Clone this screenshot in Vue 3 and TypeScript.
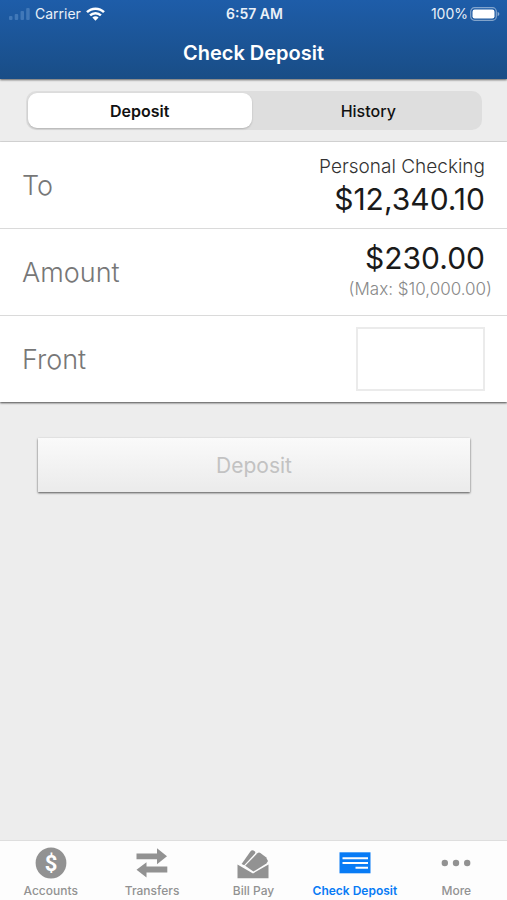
<script setup lang="ts">
import { ref } from 'vue'

type View = 'deposit' | 'history'
type Icon = 'accounts' | 'transfers' | 'billpay' | 'check' | 'more'

interface Tab {
  id: Icon
  label: string
}

const view = ref<View>('deposit')
const views: { id: View; label: string }[] = [
  { id: 'deposit', label: 'Deposit' },
  { id: 'history', label: 'History' },
]

const amount = ref('$230.00')
const activeTab = ref<Icon>('check')
const tabs: Tab[] = [
  { id: 'accounts', label: 'Accounts' },
  { id: 'transfers', label: 'Transfers' },
  { id: 'billpay', label: 'Bill Pay' },
  { id: 'check', label: 'Check Deposit' },
  { id: 'more', label: 'More' },
]
</script>

<template>
  <div class="screen">
    <header class="top">
      <div class="status">
        <div class="status-left">
          <svg class="signal" width="21" height="14" viewBox="0 0 21 14" aria-hidden="true">
            <rect x="0" y="9" width="3.500" height="4" rx="1" />
            <rect x="5.700" y="7" width="3.500" height="6" rx="1" />
            <rect x="11.500" y="4" width="3.500" height="9" rx="1" />
            <rect x="17.200" y="1" width="3.500" height="12" rx="1" />
          </svg>
          <span>Carrier</span>
          <svg width="19" height="14" viewBox="0 0 19 14" aria-hidden="true">
            <g fill="none" stroke="#fff" stroke-width="2.5">
              <path d="M1 5.2C5.700 .5 13.300 .5 18 5.200" />
              <path d="M4.100 8.400C7.100 5.400 11.900 5.400 14.900 8.400" />
            </g>
            <path d="M6.400 10.500C8.100 8.900 10.900 8.900 12.600 10.500L9.500 13.700Z" fill="#fff" />
          </svg>
        </div>
        <span class="time">6:57 AM</span>
        <div class="status-right">
          <span>100%</span>
          <svg width="30" height="14" viewBox="0 0 30 14" aria-hidden="true">
            <rect x=".7" y=".7" width="25.600" height="12.600" rx="3.800" fill="none" stroke="#fff" stroke-opacity=".45" stroke-width="1.200" />
            <rect x="2.500" y="2.500" width="22" height="9" rx="2.200" fill="#fff" />
            <path d="M27.600 4.700Q29.400 5.500 29.400 7T27.600 9.300Z" fill="#fff" fill-opacity=".5" />
          </svg>
        </div>
      </div>
      <h1>Check Deposit</h1>
    </header>

    <div class="segment-bar">
      <div class="segment">
        <button
          v-for="v in views"
          :key="v.id"
          type="button"
          :class="{ selected: view === v.id }"
          :aria-pressed="view === v.id"
          @click="view = v.id"
        >
          {{ v.label }}
        </button>
      </div>
    </div>

    <main>
      <section class="rows">
        <div class="row">
          <span class="label">To</span>
          <div class="value">
            <span class="account">Personal Checking</span>
            <span class="money">$12,340.10</span>
          </div>
        </div>
        <div class="row">
          <label class="label" for="amount">Amount</label>
          <div class="value">
            <input id="amount" v-model="amount" class="money" type="text" inputmode="decimal" />
            <span class="limit">(Max: $10,000.00)</span>
          </div>
        </div>
        <div class="row">
          <label class="label" for="front">Front</label>
          <button id="front" class="photo" type="button"></button>
        </div>
      </section>
      <button class="submit" type="button" disabled>Deposit</button>
    </main>

    <nav class="tabs">
      <a
        v-for="t in tabs"
        :key="t.id"
        href="#"
        :class="{ active: activeTab === t.id }"
        @click.prevent="activeTab = t.id"
      >
        <svg width="32" height="32" viewBox="0 0 32 32" fill="currentColor" aria-hidden="true">
          <template v-if="t.id === 'accounts'">
            <circle cx="16" cy="16" r="15.400" />
            <text x="16" y="24" class="dollar">$</text>
          </template>
          <template v-else-if="t.id === 'transfers'">
            <path d="M.5 6.500H21V1.200L31 9.300 21 17.200V12.200H.5Z" />
            <path d="M31.300 19.400H10.500V15.200L.5 22.800 10.500 30.400V25.400H31.300Z" />
          </template>
          <template v-else-if="t.id === 'billpay'">
            <path d="M4.600 17L13.400 4.600Q14.800 2.800 16.500 3.600L18 4.600Q18.800 5.500 17.800 6.700L7.200 18.200Z" />
            <path d="M8.200 18.800L20.400 6.300Q21.800 5 23.400 6L29 10.200 31 14 29.400 16.400 16.400 24.600Z" />
            <path d="M.5 17.600L16 26.400 31.500 17.600V31.300H.5Z" />
          </template>
          <template v-else-if="t.id === 'check'">
            <path d="M.5 5.300H31.500V26.300H.5Z" />
            <path d="M3.500 11.300H29M3.500 16H29M16.500 20.700H29" class="lines" />
          </template>
          <template v-else>
            <circle cx="4.800" cy="16" r="3.200" />
            <circle cx="16" cy="16" r="3.200" />
            <circle cx="27.200" cy="16" r="3.200" />
          </template>
        </svg>
        <span>{{ t.label }}</span>
      </a>
    </nav>
  </div>
</template>

<style>
body {
  margin: 0;
  background: #ededed;
}
</style>

<style scoped>
.screen {
  display: flex;
  flex-direction: column;
  min-height: 100vh;
  background: #ededed;
  color: #1c1c1c;
  font-family: Inter, "Liberation Sans", sans-serif;
}

button,
input {
  margin: 0;
  padding: 0;
  border: 0;
  font-family: inherit;
  color: inherit;
}

.top {
  position: relative;
  box-sizing: border-box;
  height: 79px;
  background: linear-gradient(#1e5da9, #194d86);
  box-shadow: 0 1px 2px rgba(0, 0, 0, 0.6);
  color: #fff;
}

.status {
  display: grid;
  grid-template-columns: 1fr auto 1fr;
  align-items: center;
  height: 27px;
  padding: 0 7px 0 9px;
  font-size: 14px;
  line-height: 27px;
  color: #e9f0f8;
}

.status-left,
.status-right {
  display: flex;
  align-items: center;
  gap: 5px;
}

.status-right {
  justify-content: flex-end;
  gap: 2px;
}

.signal {
  fill: #4178b8;
}

.time {
  font-weight: 600;
}

h1 {
  margin: 0;
  text-align: center;
  font-size: 20px;
  line-height: 52px;
  font-weight: 600;
}

.segment-bar {
  padding: 12px 25px 11px 26px;
  border-bottom: 1px solid #dcdcdc;
}

.segment {
  display: grid;
  grid-template-columns: 1fr 1fr;
  gap: 5px;
  padding: 2px;
  border-radius: 10px;
  background: #dedede;
}

.segment button {
  height: 35px;
  border-radius: 9px;
  background: transparent;
  font-size: 16px;
  font-weight: 500;
  color: #111;
}

.segment .selected {
  background: #fff;
  box-shadow: 0 1px 2px rgba(0, 0, 0, 0.2);
  font-weight: 600;
}

main {
  display: flex;
  flex: 1;
  flex-direction: column;
}

.rows {
  background: #fff;
  box-shadow: 0 1px 2px rgba(0, 0, 0, 0.7);
}

.row {
  display: flex;
  align-items: center;
  justify-content: space-between;
  height: 86px;
  padding: 0 22px;
}

.row + .row {
  border-top: 1px solid #dadada;
}

.label {
  font-size: 27px;
  font-weight: 300;
  color: #777;
}

.value {
  display: flex;
  flex-direction: column;
  align-items: flex-end;
}

.account {
  font-size: 19px;
  line-height: 27px;
  font-weight: 300;
  color: #333;
}

.money {
  width: 200px;
  height: 38px;
  background: transparent;
  text-align: right;
  font-size: 30px;
  line-height: 38px;
  color: #1a1a1a;
}

.limit {
  margin-right: -7px;
  padding-bottom: 4px;
  font-size: 17px;
  line-height: 24px;
  font-weight: 300;
  color: #888;
}

.photo {
  width: 129px;
  height: 64px;
  border: 2px solid #ebebeb;
  background: #fff;
}

.submit {
  height: 54px;
  margin: 36px 37px 0 38px;
  background: linear-gradient(#fafafa, #ebebeb);
  box-shadow: 0 1px 2px rgba(0, 0, 0, 0.65);
  font-size: 21px;
  font-weight: 400;
  color: #c2c2c2;
}

.tabs {
  display: grid;
  grid-template-columns: repeat(5, 1fr);
  height: 59px;
  border-top: 1px solid #dedede;
  background: #fdfdfd;
}

.tabs a {
  display: flex;
  flex-direction: column;
  align-items: center;
  gap: 4px;
  padding-top: 6px;
  color: #929292;
  font-size: 12px;
  line-height: 16px;
  font-weight: 500;
  white-space: nowrap;
  text-decoration: none;
}

.tabs .active {
  color: #087bf5;
  font-weight: 600;
}

.dollar {
  fill: #fff;
  font-family: Roboto, sans-serif;
  font-size: 22px;
  font-weight: 700;
  text-anchor: middle;
}

.lines {
  fill: none;
  stroke: #fdfdfd;
  stroke-width: 2px;
}
</style>
